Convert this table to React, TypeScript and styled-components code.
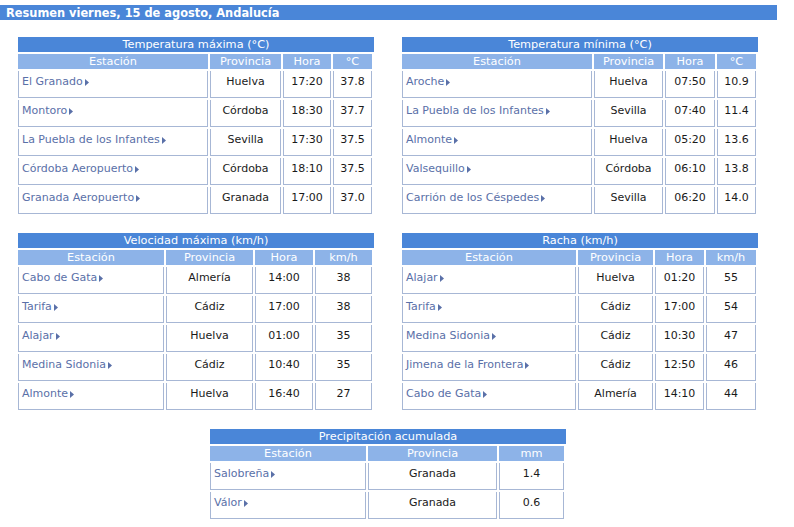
import React from "react";
import styled, { createGlobalStyle } from "styled-components";

const GlobalStyle = createGlobalStyle`
  html, body { margin: 0; padding: 0; background: #ffffff; }
  body { font-family: "DejaVu Sans", Verdana, sans-serif; color: #1a1a1a; }
`;

const BLUE = "#4a86d8";
const LIGHT = "#8db3e8";
const BORDER = "#a7b7d5";
const LINK = "#5a70a8";

const Page = styled.div`
  padding-top: 5px;
  width: 794px;
`;

const TitleBar = styled.div`
  width: 777px;
  height: 15px;
  box-sizing: border-box;
  padding: 1px 0 0 6px;
  background: ${BLUE};
  color: #ffffff;
  font-weight: bold;
  font-size: 11.4px;
  line-height: 14px;
  white-space: nowrap;
`;

const Board = styled.div`
  display: grid;
  grid-template-columns: 356px 356px;
  column-gap: 28px;
  row-gap: 19px;
  margin: 17px 0 0 18px;
`;

const Panel = styled.section<{ $wide?: boolean }>`
  width: 356px;
  ${(p) => (p.$wide ? "grid-column: 1 / -1; justify-self: center;" : "")}
`;

const PanelTitle = styled.div`
  height: 15px;
  margin-bottom: 2px;
  background: ${BLUE};
  color: #ffffff;
  font-size: 11.3px;
  line-height: 15px;
  text-align: center;
  white-space: nowrap;
`;

const Cells = styled.div<{ $cols: string }>`
  display: grid;
  grid-template-columns: ${(p) => p.$cols};
  gap: 2px;
  width: 354px;
`;

const HeadCell = styled.div`
  height: 15px;
  background: ${LIGHT};
  color: #ffffff;
  font-size: 11.3px;
  line-height: 15px;
  text-align: center;
  white-space: nowrap;
`;

const DataCell = styled.div<{ $left?: boolean }>`
  height: 27px;
  box-sizing: border-box;
  border: 1px solid ${BORDER};
  border-top: none;
  padding: 4px ${(p) => (p.$left ? "0 0 3px" : "0 0 0")};
  font-size: 11px;
  line-height: 13px;
  text-align: ${(p) => (p.$left ? "left" : "center")};
  white-space: nowrap;
  color: #1a1a1a;
`;

const StationLink = styled.a`
  color: ${LINK};
  text-decoration: none;
  display: inline-flex;
  align-items: center;
`;

const Arrow = styled.svg`
  margin-left: 2px;
  margin-top: 1px;
  flex: none;
`;

type Row = string[];

type TableData = {
  title: string;
  cols: string;
  heads: string[];
  rows: Row[];
  wide?: boolean;
};

const tables: TableData[] = [
  {
    title: "Temperatura máxima (°C)",
    cols: "190px 71px 48px 39px",
    heads: ["Estación", "Provincia", "Hora", "°C"],
    rows: [
      ["El Granado", "Huelva", "17:20", "37.8"],
      ["Montoro", "Córdoba", "18:30", "37.7"],
      ["La Puebla de los Infantes", "Sevilla", "17:30", "37.5"],
      ["Córdoba Aeropuerto", "Córdoba", "18:10", "37.5"],
      ["Granada Aeropuerto", "Granada", "17:00", "37.0"],
    ],
  },
  {
    title: "Temperatura mínima (°C)",
    cols: "190px 69px 50px 39px",
    heads: ["Estación", "Provincia", "Hora", "°C"],
    rows: [
      ["Aroche", "Huelva", "07:50", "10.9"],
      ["La Puebla de los Infantes", "Sevilla", "07:40", "11.4"],
      ["Almonte", "Huelva", "05:20", "13.6"],
      ["Valsequillo", "Córdoba", "06:10", "13.8"],
      ["Carrión de los Céspedes", "Sevilla", "06:20", "14.0"],
    ],
  },
  {
    title: "Velocidad máxima (km/h)",
    cols: "146px 87px 58px 57px",
    heads: ["Estación", "Provincia", "Hora", "km/h"],
    rows: [
      ["Cabo de Gata", "Almería", "14:00", "38"],
      ["Tarifa", "Cádiz", "17:00", "38"],
      ["Alajar", "Huelva", "01:00", "35"],
      ["Medina Sidonia", "Cádiz", "10:40", "35"],
      ["Almonte", "Huelva", "16:40", "27"],
    ],
  },
  {
    title: "Racha (km/h)",
    cols: "174px 75px 49px 50px",
    heads: ["Estación", "Provincia", "Hora", "km/h"],
    rows: [
      ["Alajar", "Huelva", "01:20", "55"],
      ["Tarifa", "Cádiz", "17:00", "54"],
      ["Medina Sidonia", "Cádiz", "10:30", "47"],
      ["Jimena de la Frontera", "Cádiz", "12:50", "46"],
      ["Cabo de Gata", "Almería", "14:10", "44"],
    ],
  },
  {
    title: "Precipitación acumulada",
    cols: "156px 129px 65px",
    heads: ["Estación", "Provincia", "mm"],
    rows: [
      ["Salobreña", "Granada", "1.4"],
      ["Válor", "Granada", "0.6"],
    ],
    wide: true,
  },
];

const SummaryTable: React.FC<{ data: TableData }> = ({ data }) => (
  <Panel $wide={data.wide}>
    <PanelTitle>{data.title}</PanelTitle>
    <Cells $cols={data.cols}>
      {data.heads.map((h) => (
        <HeadCell key={h}>{h}</HeadCell>
      ))}
      {data.rows.map((row, ri) =>
        row.map((v, ci) =>
          ci === 0 ? (
            <DataCell key={`${ri}-${ci}`} $left>
              <StationLink href="#">
                {v}
                <Arrow width="4" height="7" viewBox="0 0 4 7">
                  <polygon points="0,0 4,3.5 0,7" fill={LINK} />
                </Arrow>
              </StationLink>
            </DataCell>
          ) : (
            <DataCell key={`${ri}-${ci}`}>{v}</DataCell>
          )
        )
      )}
    </Cells>
  </Panel>
);

export default function App() {
  return (
    <Page>
      <GlobalStyle />
      <TitleBar>Resumen viernes, 15 de agosto, Andalucía</TitleBar>
      <Board>
        {tables.map((t) => (
          <SummaryTable key={t.title} data={t} />
        ))}
      </Board>
    </Page>
  );
}
